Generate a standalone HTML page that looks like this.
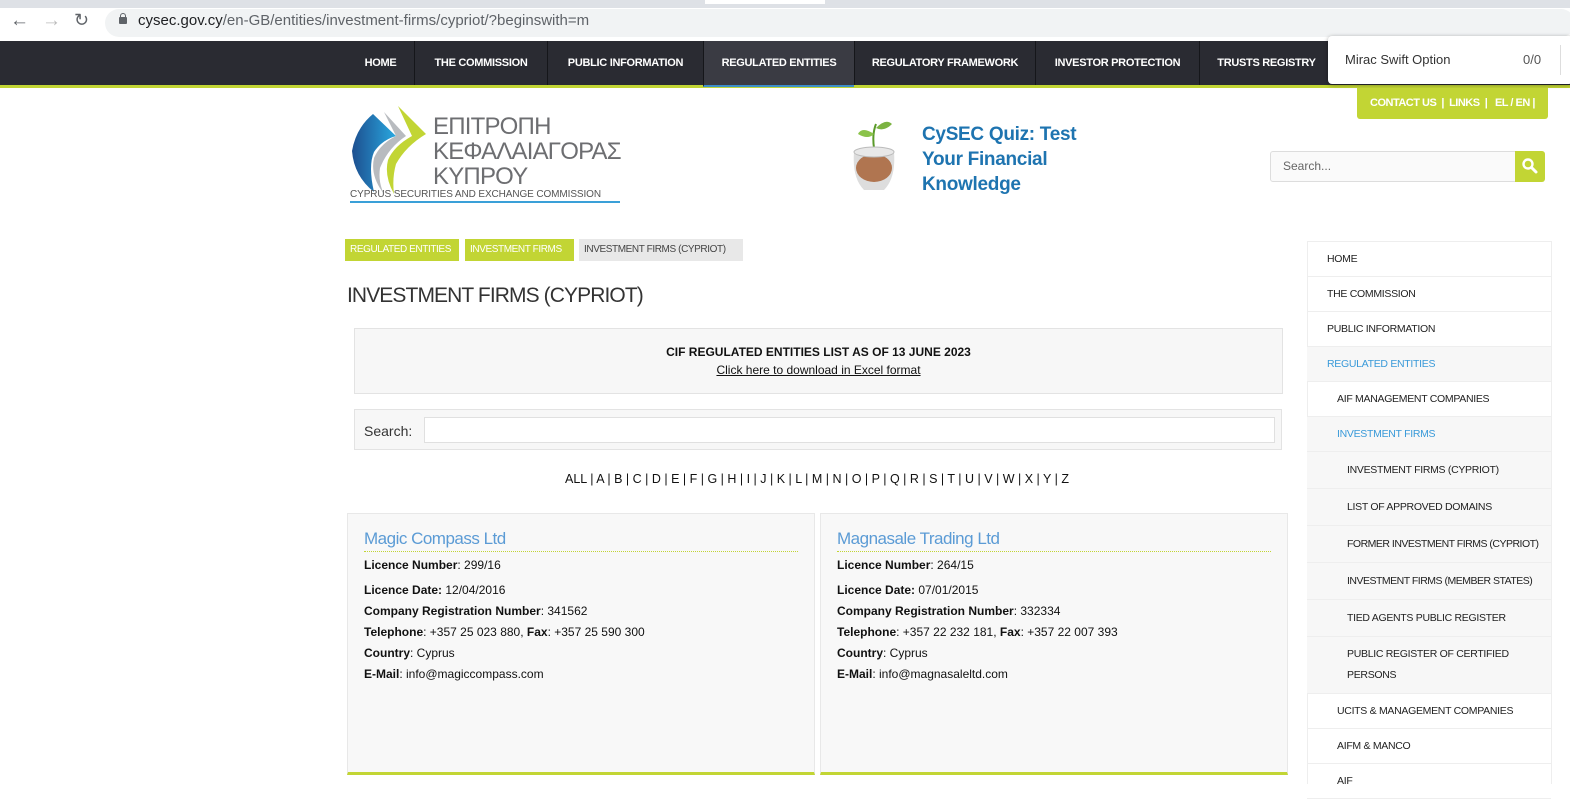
<!DOCTYPE html>
<html><head><meta charset="utf-8"><style>
*{margin:0;padding:0;box-sizing:border-box}
body{width:1570px;height:784px;overflow:hidden;background:#fff;font-family:"Liberation Sans",sans-serif;position:relative;color:#222}
.a{position:absolute}
.nav a{position:absolute;top:41px;height:44px;line-height:44px;color:#fff;font-size:11px;font-weight:bold;text-align:center;border-left:1px solid #15161a;letter-spacing:-0.3px;white-space:nowrap}
.crumb{position:absolute;top:239px;height:22px;line-height:22px;font-size:10px;padding:0 5px;color:#fff;letter-spacing:-0.4px;white-space:nowrap;overflow:hidden}
.side div{position:absolute;left:1307px;width:244px;border-bottom:1px solid #eee;font-size:10.5px;color:#222;display:flex;align-items:center;letter-spacing:-0.3px;white-space:nowrap}
.card{position:absolute;top:513px;width:468px;height:262px;background:#f8f8f8;border:1px solid #e8e8e8;border-bottom:3px solid #c2d534;padding:0 16px}
.card h2{font-weight:normal;color:#5b9bd5;font-size:17px;margin-top:15px;padding-bottom:2px;border-bottom:1px dotted #c2d534;letter-spacing:-0.5px}
.card p{font-size:12px;color:#111;line-height:21px}
.card b{font-weight:bold}
</style></head><body>
<div class="a" style="left:0;top:0;width:1570px;height:8px;background:#dee1e6"></div>
<div class="a" style="left:705px;top:0;width:120px;height:4px;background:#fff"></div>
<div class="a" style="left:0;top:8px;width:1570px;height:33px;background:#fff"></div>
<div class="a" style="left:10px;top:10px;font-size:19px;color:#5f6368">&#8592;</div>
<div class="a" style="left:42px;top:10px;font-size:19px;color:#bbb">&#8594;</div>
<div class="a" style="left:74px;top:10px;font-size:18px;color:#5f6368">&#8635;</div>
<div class="a" style="left:105px;top:9px;width:1470px;height:28px;border-radius:14px;background:#f1f3f4"></div>
<div class="a" style="left:119px;top:17px;width:8px;height:7px;background:#5f6368;border-radius:1px"></div>
<div class="a" style="left:120px;top:13px;width:6px;height:6px;border:1.5px solid #5f6368;border-bottom:none;border-radius:3px 3px 0 0"></div>
<div class="a" style="left:138px;top:12px;font-size:15px;color:#202124">cysec.gov.cy<span style="color:#5f6368">/en-GB/entities/investment-firms/cypriot/?beginswith=m</span></div>
<div class="a" style="left:0;top:41px;width:1570px;height:44px;background:#2a2b32"></div>
<div class="a" style="left:0;top:85px;width:1570px;height:3px;background:#c2d534"></div>
<div class="nav">
<a style="left:347px;width:67px;border-left:none">HOME</a>
<a style="left:414px;width:133px">THE COMMISSION</a>
<a style="left:547px;width:156px">PUBLIC INFORMATION</a>
<a style="left:703px;width:151px;background:#3a3b43;border-bottom:2px solid #3d8ec9;height:46px">REGULATED ENTITIES</a>
<a style="left:854px;width:181px">REGULATORY FRAMEWORK</a>
<a style="left:1035px;width:164px">INVESTOR PROTECTION</a>
<a style="left:1199px;width:134px">TRUSTS REGISTRY</a>
</div>
<div class="a" style="left:1328px;top:36px;width:245px;height:48px;background:#fff;border-radius:4px;box-shadow:0 1px 4px rgba(0,0,0,.4)"></div>
<div class="a" style="left:1345px;top:52px;font-size:13px;color:#333">Mirac Swift Option</div>
<div class="a" style="left:1523px;top:52px;font-size:13px;color:#555">0/0</div>
<div class="a" style="left:1560px;top:45px;width:1px;height:30px;background:#ddd"></div>
<div class="a" style="left:1357px;top:88px;width:191px;height:31px;background:#c2d534;border-radius:0 0 3px 3px;color:#fff;font-size:11px;font-weight:bold;line-height:31px;padding-left:13px;letter-spacing:-0.5px;white-space:nowrap">CONTACT US &nbsp;| &nbsp;LINKS &nbsp;| &nbsp; EL / EN |</div>
<svg class="a" style="left:348px;top:106px" width="80" height="92" viewBox="0 0 80 92">
<defs><linearGradient id="g" x1="0" x2="1"><stop offset="0" stop-color="#1d4f8f"/><stop offset="1" stop-color="#29a8e0"/></linearGradient></defs>
<path d="M25 8 Q8 22 4 45 Q6 70 26 86 Q20 60 26 46 Q34 34 48 30 Z" fill="url(#g)"/>
<path d="M36 6 L58 30 Q40 42 32 62 Q30 76 36 88 Q22 70 26 52 Q32 38 48 30 Z" fill="#b8bbbf"/>
<path d="M50 0 L78 28 Q58 40 48 58 Q44 72 46 88 Q36 70 40 54 Q46 40 64 30 Z" fill="#c2d534"/>
</svg>
<div class="a" style="left:433px;top:114px;font-size:24px;color:#6d6e71;line-height:25px;letter-spacing:-0.8px">ΕΠΙΤΡΟΠΗ<br>ΚΕΦΑΛΑΙΑΓΟΡΑΣ<br>ΚΥΠΡΟΥ</div>
<div class="a" style="left:350px;top:189px;font-size:10px;color:#555;letter-spacing:-0.1px;border-bottom:2px solid #3aa0d8;padding-bottom:1px;width:270px;white-space:nowrap">CYPRUS SECURITIES AND EXCHANGE COMMISSION</div>
<svg class="a" style="left:846px;top:118px" width="56" height="76" viewBox="0 0 56 76"><path d="M28 30 Q26 16 30 6" stroke="#5a9a2a" stroke-width="2" fill="none"/><path d="M30 10 Q40 0 46 6 Q38 14 30 10Z" fill="#7cb342"/><path d="M28 16 Q16 8 12 16 Q22 22 28 16Z" fill="#8bc34a"/><path d="M8 34 Q6 60 18 72 L38 72 Q50 60 48 34 Z" fill="#ddd"/><ellipse cx="28" cy="50" rx="18" ry="14" fill="#b07550"/><ellipse cx="28" cy="34" rx="20" ry="5" fill="#e8e8e8" stroke="#bbb"/></svg>
<div class="a" style="left:922px;top:122px;font-size:19px;font-weight:bold;color:#1e74b0;line-height:25px;letter-spacing:-0.3px">CySEC Quiz: Test<br>Your Financial<br>Knowledge</div>
<div class="a" style="left:1270px;top:151px;width:246px;height:31px;border:1px solid #ddd;border-radius:3px 0 0 3px;background:#fafafa;font-size:12px;color:#666;line-height:29px;padding-left:12px">Search...</div>
<div class="a" style="left:1515px;top:151px;width:30px;height:31px;background:#c2d534;border-radius:0 3px 3px 0"></div>
<svg class="a" style="left:1521px;top:157px" width="18" height="18" viewBox="0 0 18 18"><circle cx="7" cy="7" r="4.5" stroke="#fff" stroke-width="2.4" fill="none"/><path d="M10.5 10.5 L15 15" stroke="#fff" stroke-width="3" stroke-linecap="round"/></svg>
<div class="crumb" style="left:345px;width:114px;background:#c2d534">REGULATED ENTITIES</div>
<div class="crumb" style="left:465px;width:109px;background:#c2d534">INVESTMENT FIRMS</div>
<div class="crumb" style="left:579px;width:164px;background:#e8e8e8;color:#444">INVESTMENT FIRMS (CYPRIOT)</div>
<div class="a" style="left:347px;top:284px;font-size:21px;color:#333;letter-spacing:-0.9px">INVESTMENT FIRMS (CYPRIOT)</div>
<div class="a" style="left:354px;top:328px;width:929px;height:66px;background:#f7f7f7;border:1px solid #e3e3e3;text-align:center;font-size:12px;color:#111">
<div style="margin-top:16px;font-weight:bold">CIF REGULATED ENTITIES LIST AS OF 13 JUNE 2023</div>
<div style="margin-top:4px;text-decoration:underline">Click here to download in Excel format</div></div>
<div class="a" style="left:354px;top:409px;width:928px;height:41px;background:#f7f7f7;border:1px solid #e3e3e3"></div>
<div class="a" style="left:364px;top:423px;font-size:14px;color:#333">Search:</div>
<div class="a" style="left:424px;top:417px;width:851px;height:26px;background:#fff;border:1px solid #e0e0e0"></div>
<div class="a" style="left:0;width:1634px;top:472px;text-align:center;font-size:12.5px;color:#111">ALL | A | B | C | D | E | F | G | H | I | J | K | L | M | N | O | P | Q | R | S | T | U | V | W | X | Y | Z</div>
<div class="card" style="left:347px"><h2>Magic Compass Ltd</h2>
<p style="margin-top:3px"><b>Licence Number</b>: 299/16</p>
<p style="margin-top:4px"><b>Licence Date:</b> 12/04/2016</p>
<p><b>Company Registration Number</b>: 341562</p>
<p><b>Telephone</b>: +357 25 023 880, <b>Fax</b>: +357 25 590 300</p>
<p><b>Country</b>: Cyprus</p>
<p><b>E-Mail</b>: info@magiccompass.com</p></div>
<div class="card" style="left:820px"><h2>Magnasale Trading Ltd</h2>
<p style="margin-top:3px"><b>Licence Number</b>: 264/15</p>
<p style="margin-top:4px"><b>Licence Date:</b> 07/01/2015</p>
<p><b>Company Registration Number</b>: 332334</p>
<p><b>Telephone</b>: +357 22 232 181, <b>Fax</b>: +357 22 007 393</p>
<p><b>Country</b>: Cyprus</p>
<p><b>E-Mail</b>: info@magnasaleltd.com</p></div>
<div class="a" style="left:1307px;top:241px;width:245px;height:543px;border:1px solid #eee;border-bottom:none"></div>
<div class="side">
<div style="top:242px;height:35px;padding-left:20px">HOME</div>
<div style="top:277px;height:35px;padding-left:20px">THE COMMISSION</div>
<div style="top:312px;height:35px;padding-left:20px">PUBLIC INFORMATION</div>
<div style="top:347px;height:35px;padding-left:20px;background:#f7f7f7;color:#3a9ad9">REGULATED ENTITIES</div>
<div style="top:382px;height:35px;padding-left:30px">AIF MANAGEMENT COMPANIES</div>
<div style="top:417px;height:35px;padding-left:30px;background:#f7f7f7;color:#3a9ad9">INVESTMENT FIRMS</div>
<div style="top:452px;height:37px;padding-left:40px;background:#f7f7f7">INVESTMENT FIRMS (CYPRIOT)</div>
<div style="top:489px;height:37px;padding-left:40px;background:#f7f7f7">LIST OF APPROVED DOMAINS</div>
<div style="top:526px;height:37px;padding-left:40px;background:#f7f7f7;letter-spacing:-0.5px">FORMER INVESTMENT FIRMS (CYPRIOT)</div>
<div style="top:563px;height:37px;padding-left:40px;background:#f7f7f7;letter-spacing:-0.5px">INVESTMENT FIRMS (MEMBER STATES)</div>
<div style="top:600px;height:37px;padding-left:40px;background:#f7f7f7">TIED AGENTS PUBLIC REGISTER</div>
<div style="top:637px;height:57px;padding-left:40px;background:#f7f7f7;line-height:21px;padding-right:10px;white-space:normal">PUBLIC REGISTER OF CERTIFIED PERSONS</div>
<div style="top:694px;height:35px;padding-left:30px">UCITS &amp; MANAGEMENT COMPANIES</div>
<div style="top:729px;height:35px;padding-left:30px">AIFM &amp; MANCO</div>
<div style="top:764px;height:35px;padding-left:30px">AIF</div>
</div>
</body></html>
